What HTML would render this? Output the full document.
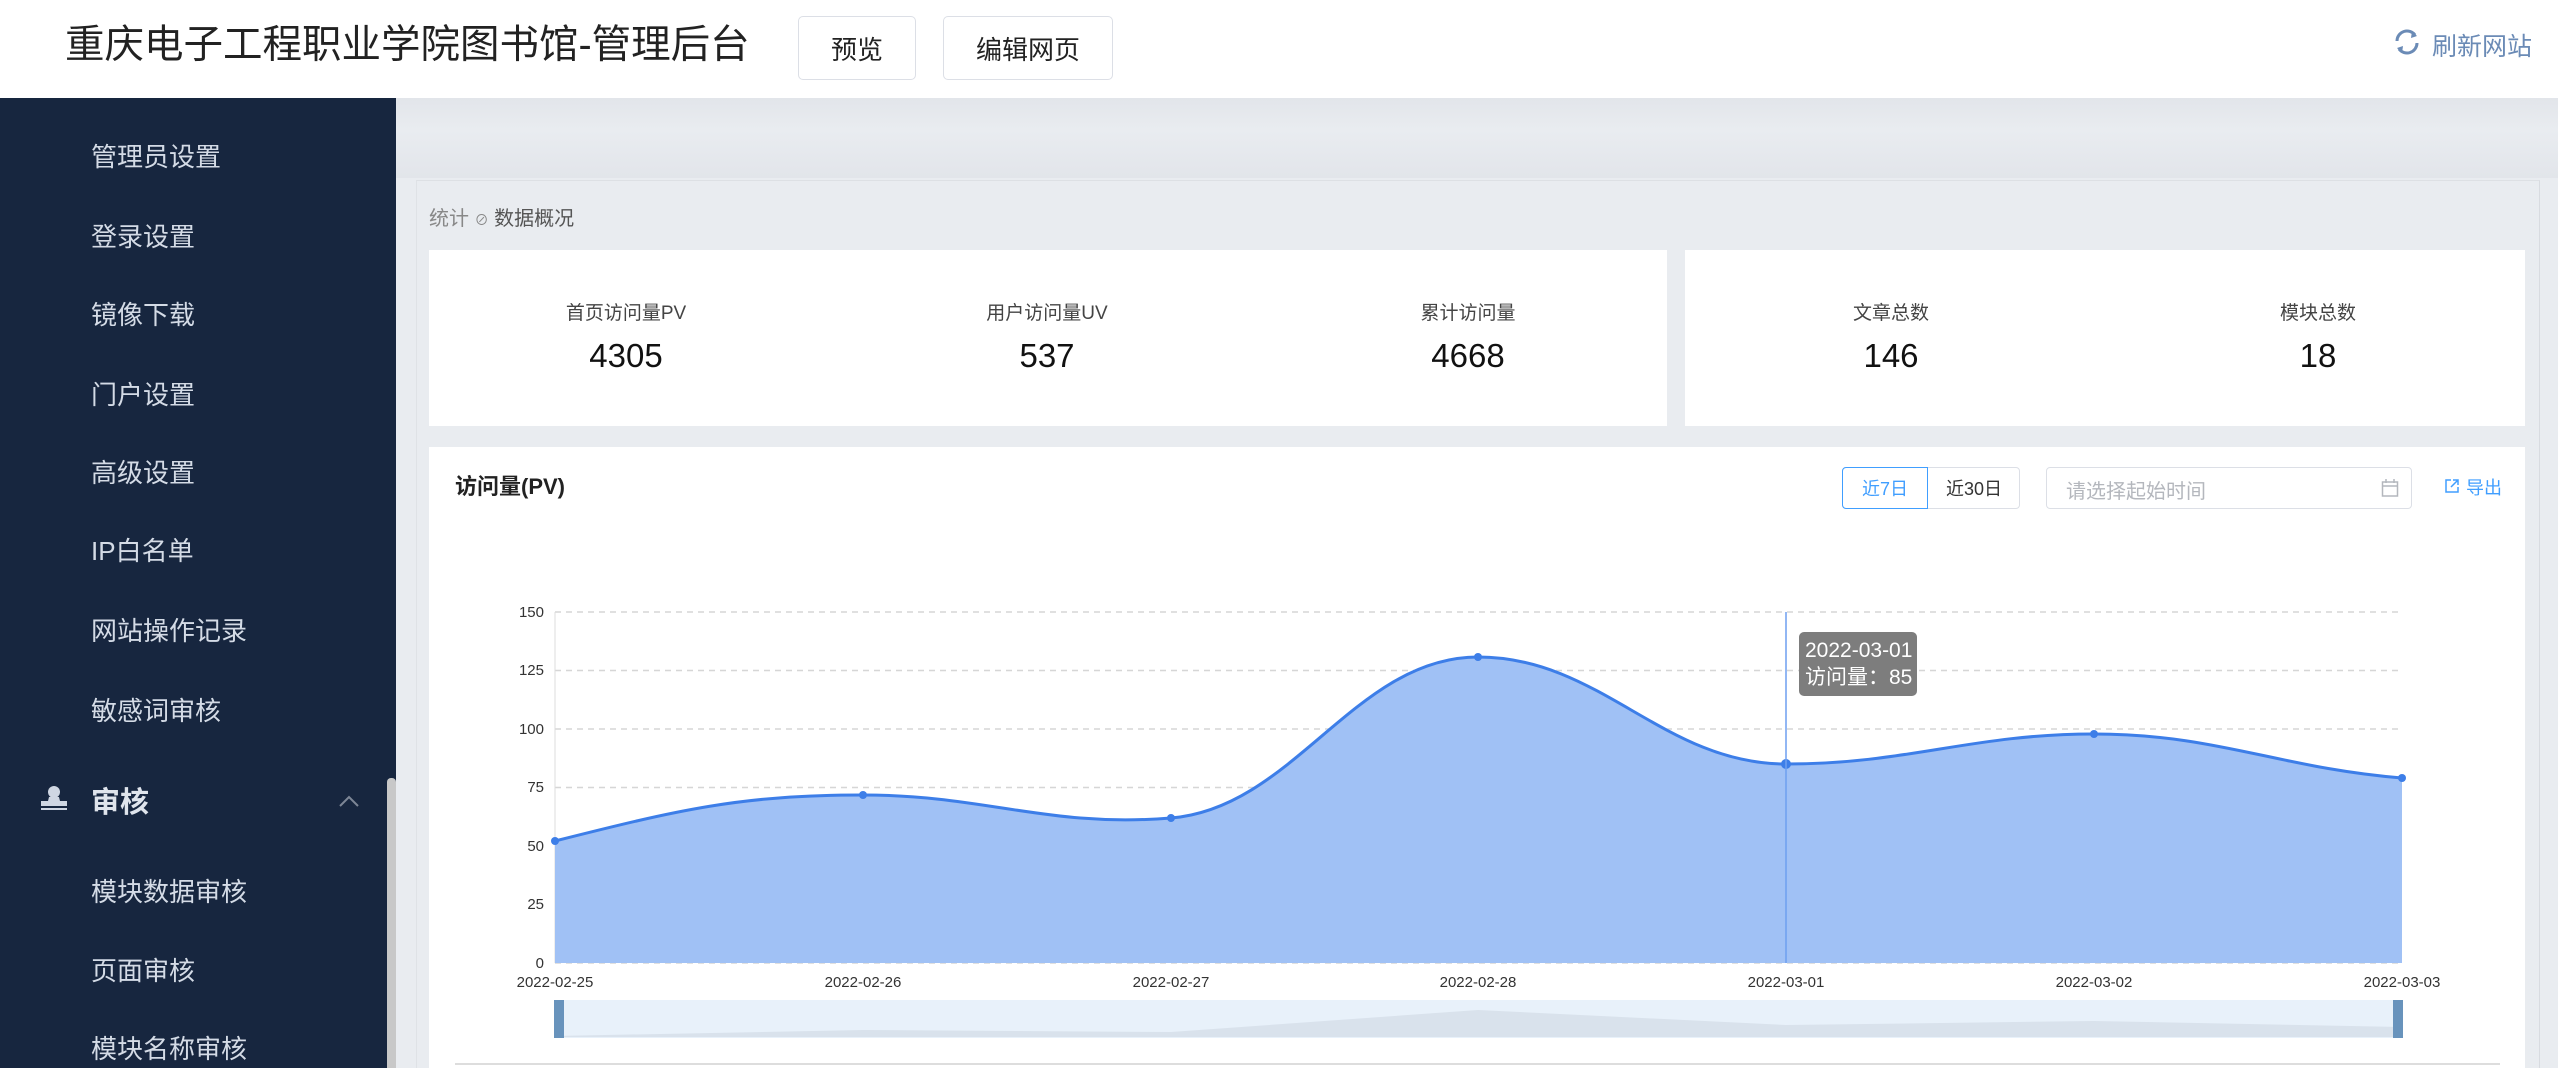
<!DOCTYPE html>
<html><head><meta charset="utf-8"><style>
*{margin:0;padding:0;box-sizing:border-box}
body{width:2558px;height:1068px;overflow:hidden;background:#e9ecf0;font-family:"Liberation Sans","Noto Sans CJK SC",sans-serif;position:relative}
.a{position:absolute}
.hdr{left:0;top:0;width:2558px;height:98px;background:#fff}
.btn{border:1px solid #dcdfe6;border-radius:5px;background:#fff;font-size:26px;color:#222;display:flex;align-items:center;justify-content:center}
.side{left:0;top:98px;width:396px;height:970px;background:#17263f}
.mi{left:91px;font-size:26px;color:#d4dbe6;line-height:30px}
.lbl{font-size:19px;color:#444;transform:translateX(-50%);white-space:nowrap;top:298px}
.num{font-size:33px;color:#111;transform:translateX(-50%);top:337px}
</style></head><body>
<div class="a hdr"></div>
<div class="a" style="left:65px;top:20px;font-size:39.5px;color:#222;line-height:50px">重庆电子工程职业学院图书馆-管理后台</div>
<div class="a btn" style="left:798px;top:16px;width:118px;height:64px">预览</div>
<div class="a btn" style="left:943px;top:16px;width:170px;height:64px">编辑网页</div>
<svg class="a" style="left:2393px;top:28px" width="28" height="28" viewBox="0 0 28 28"><path d="M4 13A10 10 0 0 1 22 7M24 15A10 10 0 0 1 6 21" fill="none" stroke="#6b8bb6" stroke-width="3"/><path d="M19 3L24 8L18 10Z M9 25L4 20L10 18Z" fill="#6b8bb6"/></svg>
<div class="a" style="left:2432px;top:27px;font-size:25px;color:#6b8bb6">刷新网站</div>

<div class="a side"></div>
<div class="a" style="left:396px;top:98px;width:2162px;height:80px;background:linear-gradient(#e2e5ea,#e9ecf0 40%,#e2e5ea)"></div>
<div class="a mi" style="top:142px">管理员设置</div>
<div class="a mi" style="top:222px">登录设置</div>
<div class="a mi" style="top:300px">镜像下载</div>
<div class="a mi" style="top:380px">门户设置</div>
<div class="a mi" style="top:458px">高级设置</div>
<div class="a mi" style="top:536px">IP白名单</div>
<div class="a mi" style="top:616px">网站操作记录</div>
<div class="a mi" style="top:696px">敏感词审核</div>
<svg class="a" style="left:40px;top:784px" width="28" height="28" viewBox="0 0 28 28"><circle cx="14" cy="8" r="6" fill="#cfd6e2"/><path d="M9 13h10l1 4h7v5H1v-5h7z" fill="#cfd6e2"/><rect x="1" y="24" width="26" height="2" fill="#cfd6e2"/></svg>
<div class="a" style="left:91px;top:779px;font-size:29px;font-weight:bold;color:#dfe4ec">审核</div>
<svg class="a" style="left:338px;top:794px" width="22" height="14"><path d="M2 12L11 3L20 12" fill="none" stroke="#7d8696" stroke-width="2"/></svg>
<div class="a mi" style="top:877px">模块数据审核</div>
<div class="a mi" style="top:956px">页面审核</div>
<div class="a mi" style="top:1034px">模块名称审核</div>
<div class="a" style="left:387px;top:778px;width:9px;height:290px;background:#c8c8c8;border-radius:4px 4px 0 0"></div>

<div class="a" style="left:416px;top:180px;width:2124px;height:888px;background:#e9ecf0;border-left:1px solid #dfe2e6;border-right:1px solid #d8dbe0;border-top:1px solid #dde0e4"></div>
<div class="a" style="left:429px;top:202px;font-size:20px;color:#888">统计 <span style="font-size:14px">⊘</span> <span style="color:#555">数据概况</span></div>
<div class="a" style="left:429px;top:250px;width:1238px;height:176px;background:#fff"></div>
<div class="a" style="left:1685px;top:250px;width:840px;height:176px;background:#fff"></div>
<div class="a lbl" style="left:626px">首页访问量PV</div><div class="a num" style="left:626px">4305</div>
<div class="a lbl" style="left:1047px">用户访问量UV</div><div class="a num" style="left:1047px">537</div>
<div class="a lbl" style="left:1468px">累计访问量</div><div class="a num" style="left:1468px">4668</div>
<div class="a lbl" style="left:1891px">文章总数</div><div class="a num" style="left:1891px">146</div>
<div class="a lbl" style="left:2318px">模块总数</div><div class="a num" style="left:2318px">18</div>

<div class="a" style="left:429px;top:447px;width:2096px;height:621px;background:#fff"></div>
<div class="a" style="left:455px;top:469px;font-size:22px;font-weight:bold;color:#222">访问量(PV)</div>
<div class="a" style="left:1842px;top:467px;width:178px;height:42px;border:1px solid #dcdfe6;border-radius:4px"></div>
<div class="a" style="left:1842px;top:467px;width:86px;height:42px;border:1px solid #409eff;border-radius:4px 0 0 4px;color:#409eff;font-size:18px;display:flex;align-items:center;justify-content:center">近7日</div>
<div class="a" style="left:1928px;top:467px;width:92px;height:42px;color:#333;font-size:18px;display:flex;align-items:center;justify-content:center">近30日</div>
<div class="a" style="left:2046px;top:467px;width:366px;height:42px;border:1px solid #dcdfe6;border-radius:4px"></div>
<div class="a" style="left:2066px;top:475px;font-size:20px;color:#b4b7bd">请选择起始时间</div>
<svg class="a" style="left:2381px;top:478px" width="18" height="20"><rect x="1.5" y="4" width="15" height="14" fill="none" stroke="#b4b7bd" stroke-width="1.5"/><path d="M1.5 8H16.5M5 1V5M13 1V5" stroke="#b4b7bd" stroke-width="1.5"/></svg>
<svg class="a" style="left:2444px;top:478px" width="16" height="16"><path d="M7 2H2V14H14V9M9 2H14V7M14 2L7 9" fill="none" stroke="#409eff" stroke-width="1.5"/></svg>
<div class="a" style="left:2466px;top:474px;font-size:18px;color:#409eff">导出</div>

<svg class="a" style="left:0;top:0" width="2558" height="1068">
<g stroke="#d6d6d6" stroke-width="1.5" stroke-dasharray="6,5">
<line x1="555" y1="612" x2="2402" y2="612"/><line x1="555" y1="670.5" x2="2402" y2="670.5"/><line x1="555" y1="729" x2="2402" y2="729"/><line x1="555" y1="787.5" x2="2402" y2="787.5"/><line x1="555" y1="846" x2="2402" y2="846"/><line x1="555" y1="904.5" x2="2402" y2="904.5"/><line x1="555" y1="963" x2="2402" y2="963"/>
</g>
<line x1="555" y1="612" x2="555" y2="963" stroke="#ddd"/>
<path d="M555,841 C678,810 740,795 863,795 C986,795 1048,828 1171,818 C1294,808 1355,657 1478,657 C1601,657 1663,764 1786,764 C1909,764 1971,734 2094,734 C2217,734 2279,768 2402,778 L2402,963 L555,963Z" fill="#a0c1f5"/>
<path d="M555,841 C678,810 740,795 863,795 C986,795 1048,828 1171,818 C1294,808 1355,657 1478,657 C1601,657 1663,764 1786,764 C1909,764 1971,734 2094,734 C2217,734 2279,768 2402,778" fill="none" stroke="#3d7ee8" stroke-width="3"/>
<g fill="#3d7ee8"><circle cx="555" cy="841" r="4"/><circle cx="863" cy="795" r="4"/><circle cx="1171" cy="818" r="4"/><circle cx="1478" cy="657" r="4"/><circle cx="1786" cy="764" r="5"/><circle cx="2094" cy="734" r="4"/><circle cx="2402" cy="778" r="4"/></g>
<line x1="1786" y1="612" x2="1786" y2="963" stroke="#6e9ff0" stroke-width="1.5"/>
<g font-family="Liberation Sans" font-size="15" fill="#333" text-anchor="end">
<text x="544" y="617">150</text><text x="544" y="675">125</text><text x="544" y="734">100</text><text x="544" y="792">75</text><text x="544" y="851">50</text><text x="544" y="909">25</text><text x="544" y="968">0</text></g>
<g font-family="Liberation Sans" font-size="15" fill="#333" text-anchor="middle">
<text x="555" y="987">2022-02-25</text><text x="863" y="987">2022-02-26</text><text x="1171" y="987">2022-02-27</text><text x="1478" y="987">2022-02-28</text><text x="1786" y="987">2022-03-01</text><text x="2094" y="987">2022-03-02</text><text x="2402" y="987">2022-03-03</text></g>
<rect x="555" y="1000" width="1847" height="38" fill="#e8f1fa"/>
<path d="M555,1036 L863,1030 L1171,1032 L1478,1010 L1786,1025 L2094,1021 L2402,1027 L2402,1037 L555,1037Z" fill="#d9e2ec"/>
<rect x="554" y="1000" width="10" height="38" fill="#6893bc"/><rect x="2393" y="1000" width="10" height="38" fill="#6893bc"/>
<line x1="455" y1="1064" x2="2500" y2="1064" stroke="#ddd" stroke-width="2"/>
<rect x="1799" y="632" width="118" height="64" rx="5" fill="#7d7d7d"/>
<text x="1805" y="657" font-family="Liberation Sans" font-size="21" fill="#fff">2022-03-01</text>
<text x="1805" y="684" font-family="Liberation Sans,Noto Sans CJK SC" font-size="21" fill="#fff">访问量：85</text>
</svg>
</body></html>
